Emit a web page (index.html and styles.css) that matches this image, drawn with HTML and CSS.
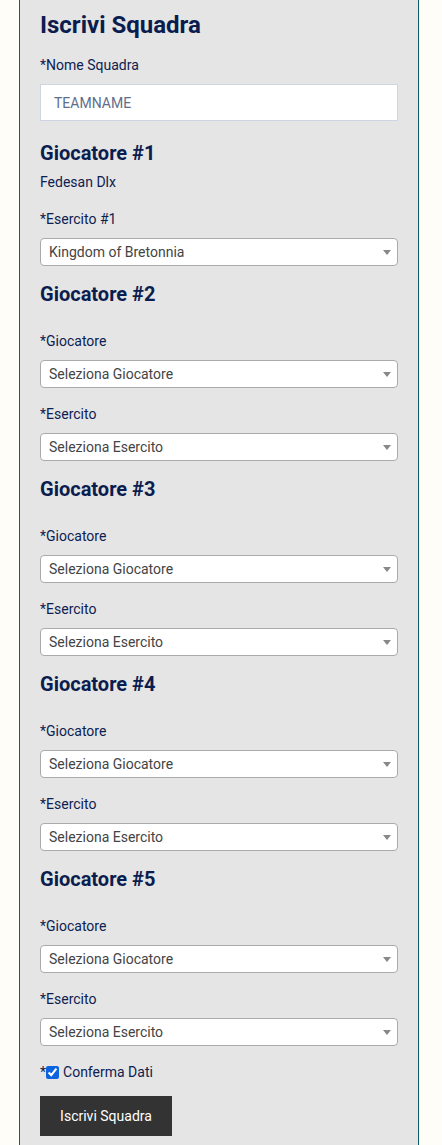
FILE: index.html
```html
<!DOCTYPE html>
<html lang="it">
<head>
<meta charset="utf-8">
<title>Iscrivi Squadra</title>
<link rel="stylesheet" href="styles.css">
</head>
<body>
<main class="panel">
  <h1 class="title">Iscrivi Squadra</h1>
  <form class="form">
    <div class="field field-name">
      <label class="label" for="team">*Nome Squadra</label>
      <input class="text-input" id="team" type="text" placeholder="TEAMNAME">
    </div>

    <section class="player player-first">
      <h2 class="player-title">Giocatore #1</h2>
      <p class="player-name">Fedesan Dlx</p>
      <div class="field">
        <label class="label">*Esercito #1</label>
        <div class="select-wrap"><div class="select">Kingdom of Bretonnia</div></div>
      </div>
    </section>

    <section class="player">
      <h2 class="player-title">Giocatore #2</h2>
      <div class="field">
        <label class="label">*Giocatore</label>
        <div class="select-wrap"><div class="select">Seleziona Giocatore</div></div>
      </div>
      <div class="field">
        <label class="label">*Esercito</label>
        <div class="select-wrap"><div class="select">Seleziona Esercito</div></div>
      </div>
    </section>

    <section class="player">
      <h2 class="player-title">Giocatore #3</h2>
      <div class="field">
        <label class="label">*Giocatore</label>
        <div class="select-wrap"><div class="select">Seleziona Giocatore</div></div>
      </div>
      <div class="field">
        <label class="label">*Esercito</label>
        <div class="select-wrap"><div class="select">Seleziona Esercito</div></div>
      </div>
    </section>

    <section class="player">
      <h2 class="player-title">Giocatore #4</h2>
      <div class="field">
        <label class="label">*Giocatore</label>
        <div class="select-wrap"><div class="select">Seleziona Giocatore</div></div>
      </div>
      <div class="field">
        <label class="label">*Esercito</label>
        <div class="select-wrap"><div class="select">Seleziona Esercito</div></div>
      </div>
    </section>

    <section class="player">
      <h2 class="player-title">Giocatore #5</h2>
      <div class="field">
        <label class="label">*Giocatore</label>
        <div class="select-wrap"><div class="select">Seleziona Giocatore</div></div>
      </div>
      <div class="field">
        <label class="label">*Esercito</label>
        <div class="select-wrap"><div class="select">Seleziona Esercito</div></div>
      </div>
    </section>

    <div class="confirm">
      <span class="star">*</span><input class="check" type="checkbox" id="conf" checked><label for="conf" class="confirm-label">Conferma Dati</label>
    </div>

    <button class="submit" type="button">Iscrivi Squadra</button>
  </form>
</main>
</body>
</html>
```

FILE: styles.css
```css
* { box-sizing: border-box; }

html, body {
  margin: 0;
  padding: 0;
  background: #fffdf7;
}

body {
  font-family: Roboto, "Liberation Sans", Arial, sans-serif;
  font-size: 14px;
  line-height: 20px;
  color: #0d2150;
}

.panel {
  width: 400px;
  margin: 0 0 0 19px;
  min-height: 1145px;
  background: #e5e5e5;
  border-left: 1px solid #0f5e6c;
  border-right: 1px solid #0f5e6c;
  padding: 11px 20px 20px 20px;
}

.title {
  margin: 0 0 16px 0;
  font-size: 24px;
  line-height: 28px;
  font-weight: 700;
  color: #0b1d4e;
}

.form { display: flex; flex-direction: column; }

.field { display: flex; flex-direction: column; }

.label {
  display: block;
  padding-top: 1px;
  margin-bottom: 9px;
  color: #0d2150;
}

.field-name .label { padding-top: 0; margin-bottom: 9px; }

.text-input {
  width: 358px;
  height: 37px;
  border: 1px solid #cdd5e3;
  background: #fff;
  padding: 0 13px;
  font-family: inherit;
  font-size: 14px;
  color: #333;
  outline: none;
}

.text-input::placeholder { color: #5e6e8c; opacity: 1; }

.player { display: flex; flex-direction: column; }

.player-title {
  margin: 16px 0 24px 0;
  font-size: 20px;
  line-height: 24px;
  font-weight: 700;
  color: #0b1d4e;
}

.player-first .player-title { margin: 20px 0 7px 0; }

.player-name {
  margin: 0 0 16px 0;
  color: #0d2150;
}

.field + .field { margin-top: 15px; }

.select-wrap { position: relative; }

.select {
  height: 28px;
  border: 1px solid #aaa;
  border-radius: 4px;
  background: #fff;
  color: #444;
  padding-left: 8px;
  line-height: 26px;
}

.select-wrap::after {
  content: "";
  position: absolute;
  right: 7px;
  top: 12px;
  border-left: 4px solid transparent;
  border-right: 4px solid transparent;
  border-top: 5px solid #888;
}

.confirm {
  display: flex;
  align-items: center;
  margin-top: 16px;
  height: 20px;
  color: #0d2150;
}

.check {
  width: 13px;
  height: 13px;
  margin: 0 4px 0 0;
  accent-color: #0b63e0;
}

.submit {
  align-self: flex-start;
  margin-top: 14px;
  width: 132px;
  height: 40px;
  border: 0;
  border-radius: 0;
  background: #333;
  color: #fff;
  font-family: inherit;
  font-size: 14px;
  padding: 0;
}
```
